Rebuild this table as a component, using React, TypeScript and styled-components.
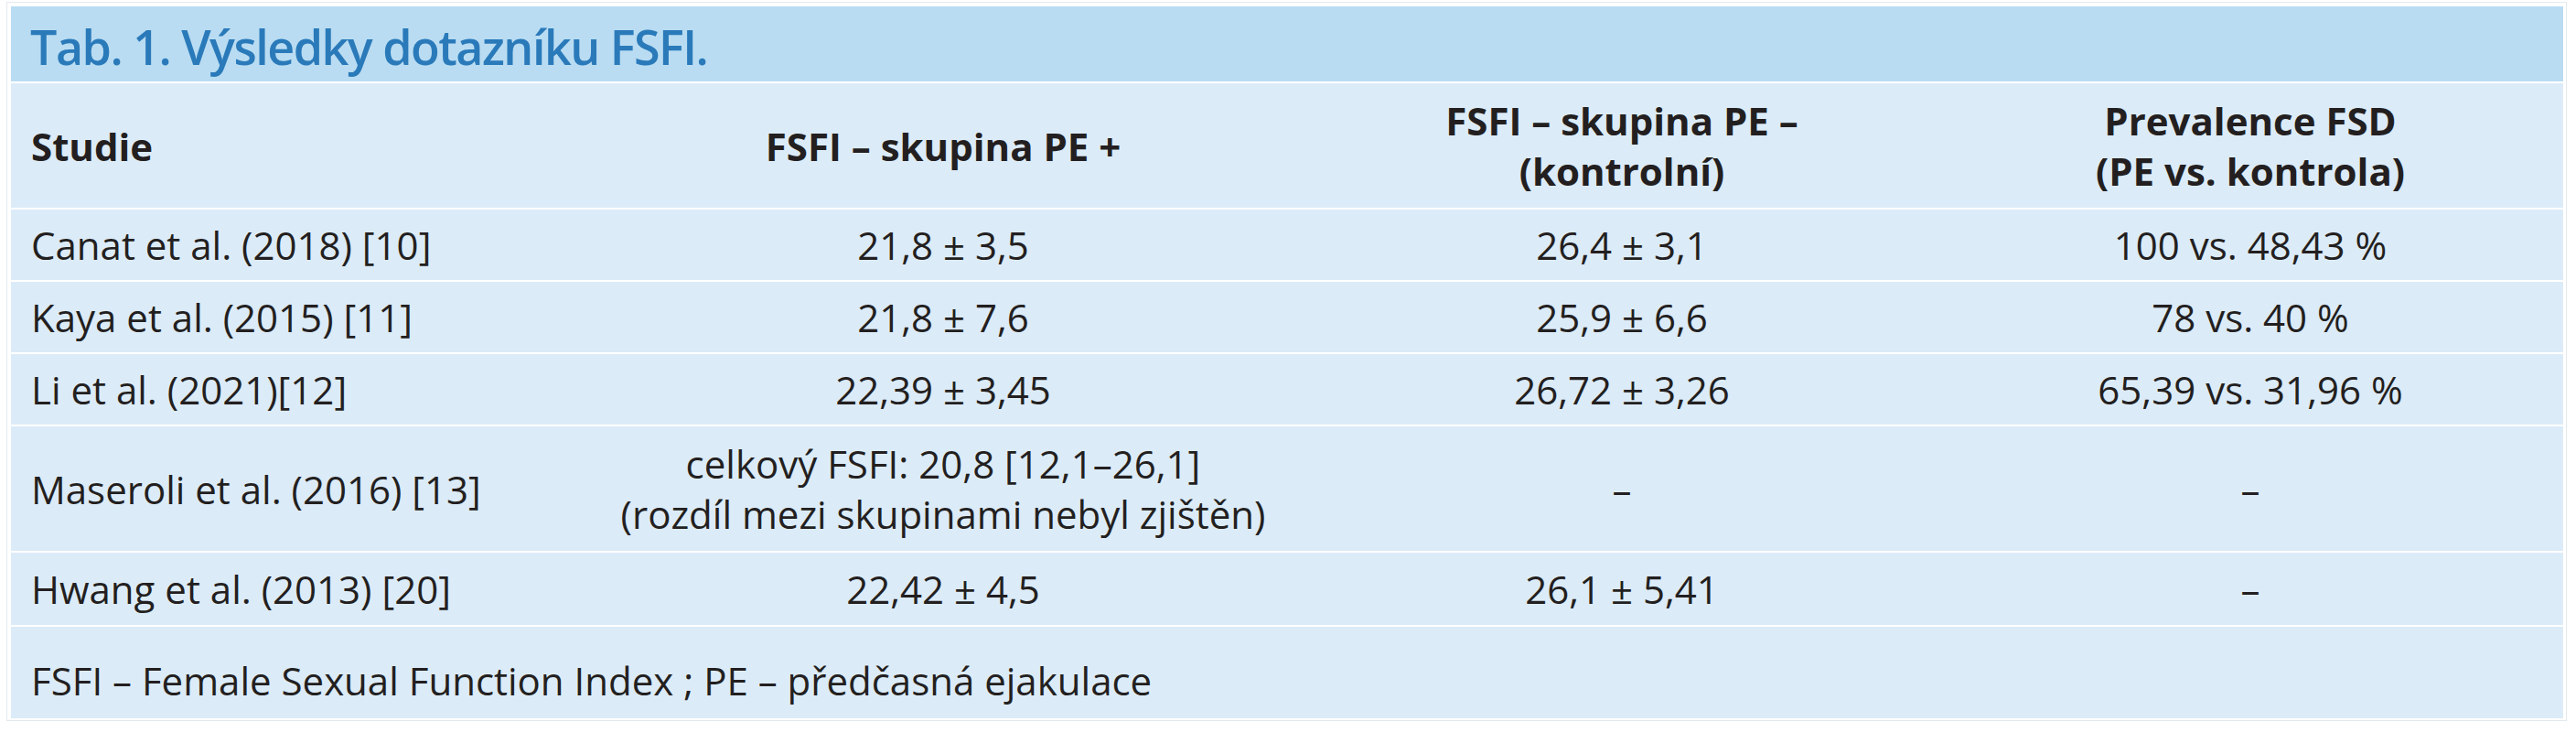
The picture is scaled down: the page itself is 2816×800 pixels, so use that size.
import React from 'react'
import styled, { createGlobalStyle } from 'styled-components'

const GlobalStyle = createGlobalStyle`
  html, body {
    margin: 0;
    padding: 0;
    background: #ffffff;
  }
  body {
    font-family: 'Open Sans', 'Noto Sans', sans-serif;
    color: #231f20;
  }
`

const COLUMNS = '622px 794px 690px 684px'

const Frame = styled.div`
  box-sizing: border-box;
  width: 2799px;
  margin: 2px 0 0 7px;
  padding: 4px 3px 2px 4px;
  border: 1px solid #e3eaef;
  background: #ffffff;
`

const Table = styled.div`
  display: flex;
  flex-direction: column;
  gap: 2px;
  background: #ffffff;
`

const TitleBar = styled.div`
  box-sizing: border-box;
  height: 82px;
  display: flex;
  align-items: center;
  padding: 5px 0 0 21px;
  background: #b9dcf2;
  color: #2a7aba;
  font-size: 52px;
  line-height: 52px;
  font-weight: 600;
  letter-spacing: -1.5px;
`

const Row = styled.div<{ $h: number }>`
  display: grid;
  grid-template-columns: ${COLUMNS};
  height: ${(p) => p.$h}px;
`

const Cell = styled.div<{ $align?: 'left' | 'center'; $bold?: boolean }>`
  box-sizing: border-box;
  display: flex;
  flex-direction: column;
  justify-content: center;
  align-items: ${(p) => (p.$align === 'left' ? 'flex-start' : 'center')};
  text-align: ${(p) => (p.$align === 'left' ? 'left' : 'center')};
  padding: ${(p) => (p.$align === 'left' ? '0 0 0 22px' : '0')};
  background: #dcebf8;
  font-size: 42px;
  line-height: 55px;
  font-weight: ${(p) => (p.$bold ? 700 : 400)};
  white-space: nowrap;
`

const FooterBar = styled.div`
  box-sizing: border-box;
  height: 100px;
  padding: 31px 0 0 22px;
  background: #dcebf8;
  font-size: 42px;
  line-height: 55px;
  white-space: nowrap;
`

type Study = {
  name: string
  pos: React.ReactNode
  neg: string
  prev: string
  h: number
}

const studies: Study[] = [
  { name: 'Canat et al. (2018) [10]', pos: '21,8 ± 3,5', neg: '26,4 ± 3,1', prev: '100 vs. 48,43 %', h: 77 },
  { name: 'Kaya et al. (2015) [11]', pos: '21,8 ± 7,6', neg: '25,9 ± 6,6', prev: '78 vs. 40 %', h: 77 },
  { name: 'Li et al. (2021)[12]', pos: '22,39 ± 3,45', neg: '26,72 ± 3,26', prev: '65,39 vs. 31,96 %', h: 77 },
  {
    name: 'Maseroli et al. (2016) [13]',
    pos: (
      <>
        <span>celkový FSFI: 20,8 [12,1–26,1]</span>
        <span>(rozdíl mezi skupinami nebyl zjištěn)</span>
      </>
    ),
    neg: '–',
    prev: '–',
    h: 136,
  },
  { name: 'Hwang et al. (2013) [20]', pos: '22,42 ± 4,5', neg: '26,1 ± 5,41', prev: '–', h: 79 },
]

export default function App() {
  return (
    <>
      <GlobalStyle />
      <Frame>
        <Table>
          <TitleBar>Tab. 1. Výsledky dotazníku FSFI.</TitleBar>
          <Row $h={136}>
            <Cell $align="left" $bold>Studie</Cell>
            <Cell $bold>FSFI – skupina PE +</Cell>
            <Cell $bold>
              <span>FSFI – skupina PE –</span>
              <span>(kontrolní)</span>
            </Cell>
            <Cell $bold>
              <span>Prevalence FSD</span>
              <span>(PE vs. kontrola)</span>
            </Cell>
          </Row>
          {studies.map((s) => (
            <Row $h={s.h} key={s.name}>
              <Cell $align="left">{s.name}</Cell>
              <Cell>{s.pos}</Cell>
              <Cell>{s.neg}</Cell>
              <Cell>{s.prev}</Cell>
            </Row>
          ))}
          <FooterBar>FSFI – Female Sexual Function Index ; PE – předčasná ejakulace</FooterBar>
        </Table>
      </Frame>
    </>
  )
}
